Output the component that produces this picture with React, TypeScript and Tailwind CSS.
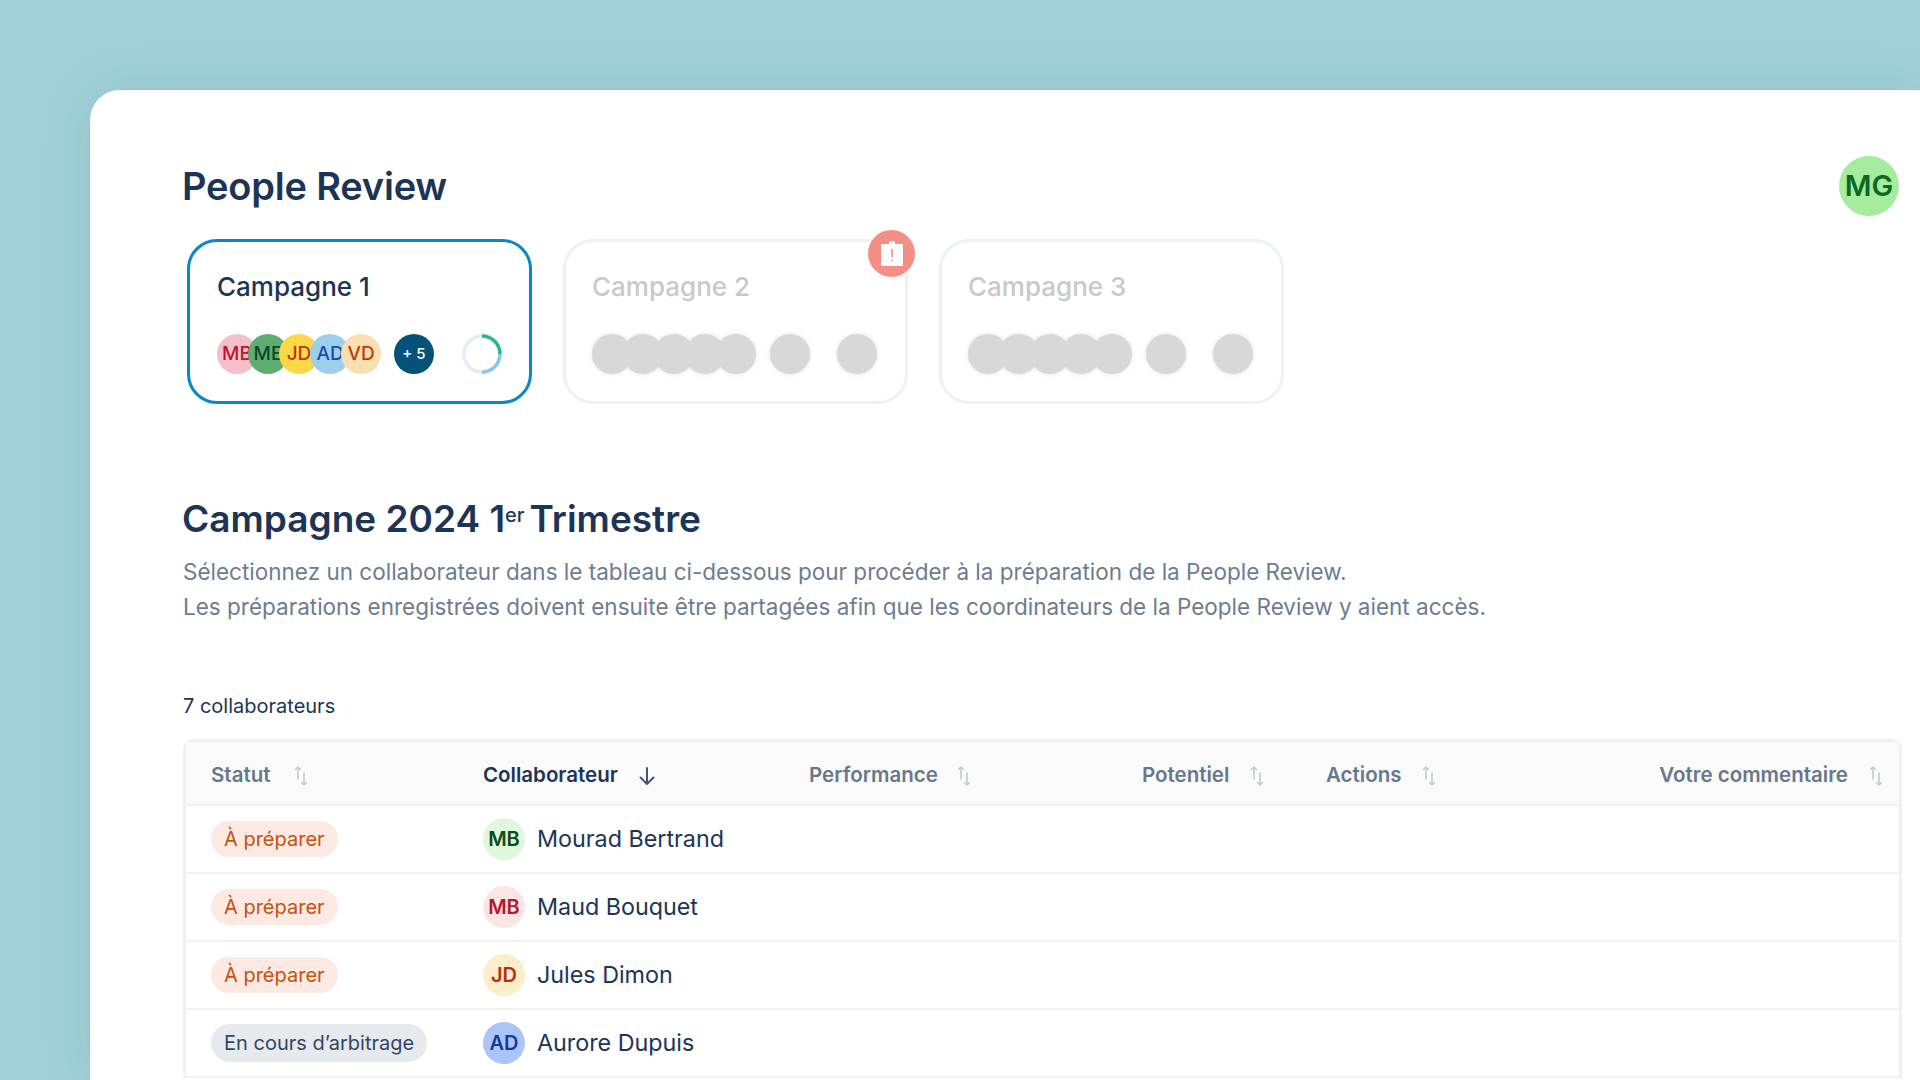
const font = { fontFamily: '"Inter", "Noto Sans", sans-serif' };

const SortIcon = () => (
  <svg width="16" height="22" viewBox="0 0 16 22" fill="none" stroke="#c3cad2" strokeWidth="1.6" strokeLinecap="round" strokeLinejoin="round">
    <path d="M5 14V2M2.500 4.500 5 2l2.500 2.500" />
    <path d="M11 8v12M8.500 17.500 11 20l2.500-2.500" />
  </svg>
);

const ArrowDown = () => (
  <svg width="22" height="22" viewBox="0 0 22 22" fill="none" stroke="#42566e" strokeWidth="2" strokeLinecap="round" strokeLinejoin="round">
    <path d="M11 3v16M4.500 12.500 11 19l6.500-6.500" />
  </svg>
);

const stack = [
  { t: 'MB', bg: 'bg-[#f4bfc9]', fg: 'text-[#b8172f]', z: 'z-0' },
  { t: 'ME', bg: 'bg-[#5fad72]', fg: 'text-[#0b4a22]', z: 'z-10' },
  { t: 'JD', bg: 'bg-[#fbd84a]', fg: 'text-[#c2360c]', z: 'z-20' },
  { t: 'AD', bg: 'bg-[#9ccfec]', fg: 'text-[#1c4aa8]', z: 'z-30' },
  { t: 'VD', bg: 'bg-[#fadfb0]', fg: 'text-[#c5380f]', z: 'z-40' },
];

const Progress = () => (
  <svg width="40" height="40" viewBox="0 0 40 40" fill="none" strokeWidth="3.5">
    <circle cx="20" cy="20" r="18" stroke="#e6edf1" />
    <path d="M20 2a18 18 0 0 1 18 18" stroke="#22bd85" />
    <path d="M38 20a18 18 0 0 1-18 18" stroke="#8ac8e6" />
  </svg>
);

const Ghost = () => <div className="w-10 h-10 rounded-full bg-[#d8d8d8] shrink-0" />;

const GhostCard = ({ title, alert }: { title: string; alert?: boolean }) => (
  <div className="relative w-[345px] h-[165px] rounded-[30px] border-[3px] border-[#edf2f5] pl-[26px] pt-[27px] bg-white">
    <div className="text-[26px] leading-[36px] font-medium text-[#c9c9c9]">{title}</div>
    <div className="flex items-center mt-[29px] drop-shadow-[0_0_2px_#e4e4e4]">
      <div className="flex -space-x-[9px]">
        <Ghost /><Ghost /><Ghost /><Ghost /><Ghost />
      </div>
      <div className="ml-[14px]"><Ghost /></div>
      <div className="ml-[27px]"><Ghost /></div>
    </div>
    {alert && (
      <div className="absolute -top-[12px] -right-[10px] w-[47px] h-[47px] rounded-full bg-[#f48f85] flex items-center justify-center">
        <svg width="24" height="27" viewBox="0 0 24 27">
          <path d="M1 5a1 1 0 0 1 1-1h7V1.500h6V4h7a1 1 0 0 1 1 1v20a1 1 0 0 1-1 1H2a1 1 0 0 1-1-1z" fill="#fff" />
          <path d="M12 9v8M12 20v1.500" stroke="#f48f85" strokeWidth="1.600" />
        </svg>
      </div>
    )}
  </div>
);

const rows = [
  { name: 'Mourad Bertrand', init: 'MB', bg: 'bg-[#dff7dc]', fg: 'text-[#0d4a1c]', status: 'prep' },
  { name: 'Maud Bouquet', init: 'MB', bg: 'bg-[#fbe5e3]', fg: 'text-[#b8172f]', status: 'prep' },
  { name: 'Jules Dimon', init: 'JD', bg: 'bg-[#fdeecb]', fg: 'text-[#c02a0a]', status: 'prep' },
  { name: 'Aurore Dupuis', init: 'AD', bg: 'bg-[#abc5f8]', fg: 'text-[#123a96]', status: 'arb' },
];

const App = () => {
  return (
    <div className="w-[1920px] h-[1080px] overflow-hidden bg-[#a1d1d7] pl-[90px] pt-[90px]" style={font}>
      <div className="h-[990px] bg-white rounded-tl-[30px] shadow-[0_0_50px_rgba(40,90,100,0.12)] pl-[93px] pr-[18px] pt-[72px]">
        {/* Header */}
        <div className="flex items-center justify-between h-[48px]">
          <h1 className="text-[38px] leading-[48px] font-semibold text-[#1c3556] tracking-[-0.2px] -ml-[1px]">People Review</h1>
          <div className="w-[60px] h-[60px] rounded-full bg-[#a6ec9f] flex items-center justify-center text-[29px] font-semibold text-[#0b6a20] mr-[3px]">MG</div>
        </div>

        {/* Campaign cards */}
        <div className="flex gap-[31px] ml-[4px] mt-[29px]">
          <div className="w-[345px] h-[165px] rounded-[30px] border-[3px] border-[#0a88c6] pl-[27px] pt-[27px] bg-white">
            <div className="text-[26px] leading-[36px] font-medium text-[#1c3556]">Campagne 1</div>
            <div className="flex items-center mt-[29px]">
              <div className="flex -space-x-[9px]">
                {stack.map((a) => (
                  <div key={a.t} className={`w-10 h-10 rounded-full flex items-center justify-center text-[19px] font-medium overflow-hidden relative ${a.bg} ${a.fg} ${a.z}`}>
                    {a.t}
                  </div>
                ))}
              </div>
              <div className="w-10 h-10 rounded-full bg-[#04527a] text-white text-[15px] flex items-center justify-center ml-[13px] font-medium">+ 5</div>
              <div className="ml-[28px]"><Progress /></div>
            </div>
          </div>
          <GhostCard title="Campagne 2" alert />
          <GhostCard title="Campagne 3" />
        </div>

        {/* Intro */}
        <h2 className="text-[37px] leading-[48px] font-semibold text-[#1c3556] mt-[91px] -ml-[1px]">
          Campagne 2024 1<sup className="text-[20px] font-medium align-baseline relative -top-[10px] mr-[5px]">er</sup>Trimestre
        </h2>
        <div className="text-[22.5px] leading-[34.5px] text-[#6c7d90] mt-[12px]">
          <p>Sélectionnez un collaborateur dans le tableau ci-dessous pour procéder à la préparation de la People Review.</p>
          <p>Les préparations enregistrées doivent ensuite être partagées afin que les coordinateurs de la People Review y aient accès.</p>
        </div>

        <div className="text-[20px] leading-[28px] text-[#1c3556] mt-[68px]">7 collaborateurs</div>

        {/* Table */}
        <div className="mt-[19px] border-[3px] border-[#edf1f4] rounded-t-[10px] border-b-0">
          <div className="h-[64px] pt-[5px] bg-[#fafafa] border-b-2 border-[#eff3f6] pl-[25px] pr-[15px] grid grid-cols-[272px_326px_333px_184px_1fr] items-center text-[20.5px] font-semibold text-[#67788b]">
            <div className="flex items-center gap-[23px]">Statut <SortIcon /></div>
            <div className="flex items-center gap-[18px] text-[#1c3556]">Collaborateur <ArrowDown /></div>
            <div className="flex items-center gap-[18px]">Performance <SortIcon /></div>
            <div className="flex items-center gap-[20px]">Potentiel <SortIcon /></div>
            <div className="flex items-center justify-between">
              <div className="flex items-center gap-[20px]">Actions <SortIcon /></div>
              <div className="flex items-center gap-[20px]">Votre commentaire <SortIcon /></div>
            </div>
          </div>
          {rows.map((r) => (
            <div key={r.name} className="h-[68px] border-b-2 border-[#eff3f6] pl-[25px] grid grid-cols-[272px_1fr] items-center">
              <div>
                {r.status === 'prep' ? (
                  <span className="inline-flex items-center h-[36px] px-[13px] rounded-full bg-[#fce9e2] text-[#c9500f] text-[20px]">À préparer</span>
                ) : (
                  <span className="inline-flex items-center h-[38px] px-[13px] rounded-full bg-[#e6e9ed] text-[#33475f] text-[20px]">En cours d’arbitrage</span>
                )}
              </div>
              <div className="flex items-center gap-[12px]">
                <div className={`w-[42px] h-[42px] rounded-full flex items-center justify-center text-[20px] font-semibold ${r.bg} ${r.fg}`}>{r.init}</div>
                <span className="text-[23.3px] text-[#1c3556]">{r.name}</span>
              </div>
            </div>
          ))}
        </div>
      </div>
    </div>
  );
};

export default App;
